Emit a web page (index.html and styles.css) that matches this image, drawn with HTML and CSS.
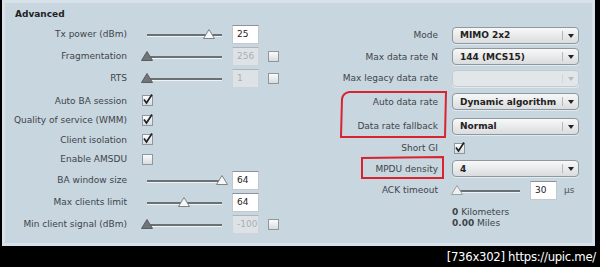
FILE: index.html
```html
<!DOCTYPE html>
<html lang="en">
<head>
    <meta charset="UTF-8">
    <title>Advanced</title>
    <link rel="stylesheet" href="styles.css">
</head>
<body>
<div class="panel">
    <div class="legend">Advanced</div>
    <div class="cols">
        <div class="col col-left">
            <div class="row">
                <label>Tx power (dBm)</label>
                <div class="slider"><div class="track"></div><svg class="thumb" style="left:61px" width="12" height="10"><path d="M6 0.5 L11.5 9.5 L0.5 9.5 Z"/></svg></div>
                <input class="num" type="text" value="25">
            </div>
            <div class="row">
                <label>Fragmentation</label>
                <div class="slider off"><div class="track"></div><svg class="thumb" style="left:-1px" width="12" height="10"><path d="M6 0.5 L11.5 9.5 L0.5 9.5 Z"/></svg></div>
                <input class="num" type="text" value="256" disabled>
                <span class="box"></span>
            </div>
            <div class="row">
                <label>RTS</label>
                <div class="slider off"><div class="track"></div><svg class="thumb" style="left:-1px" width="12" height="10"><path d="M6 0.5 L11.5 9.5 L0.5 9.5 Z"/></svg></div>
                <input class="num" type="text" value="1" disabled>
                <span class="box"></span>
            </div>
            <div class="row compact gap">
                <label>Auto BA session</label>
                <span class="box checked"><svg width="11" height="11"><path d="M2 5.5 L4.5 9 L10 0.5"/></svg></span>
            </div>
            <div class="row compact">
                <label>Quality of service (WMM)</label>
                <span class="box checked"><svg width="11" height="11"><path d="M2 5.5 L4.5 9 L10 0.5"/></svg></span>
            </div>
            <div class="row compact">
                <label>Client isolation</label>
                <span class="box checked"><svg width="11" height="11"><path d="M2 5.5 L4.5 9 L10 0.5"/></svg></span>
            </div>
            <div class="row compact">
                <label>Enable AMSDU</label>
                <span class="box"></span>
            </div>
            <div class="row">
                <label>BA window size</label>
                <div class="slider"><div class="track"></div><svg class="thumb" style="left:74px" width="12" height="10"><path d="M6 0.5 L11.5 9.5 L0.5 9.5 Z"/></svg></div>
                <input class="num" type="text" value="64">
            </div>
            <div class="row">
                <label>Max clients limit</label>
                <div class="slider"><div class="track"></div><svg class="thumb" style="left:36px" width="12" height="10"><path d="M6 0.5 L11.5 9.5 L0.5 9.5 Z"/></svg></div>
                <input class="num" type="text" value="64">
            </div>
            <div class="row">
                <label>Min client signal (dBm)</label>
                <div class="slider off"><div class="track"></div><svg class="thumb" style="left:-1px" width="12" height="10"><path d="M6 0.5 L11.5 9.5 L0.5 9.5 Z"/></svg></div>
                <input class="num" type="text" value="-100" disabled>
                <span class="box"></span>
            </div>
        </div>

        <div class="col col-right">
            <div class="row">
                <label>Mode</label>
                <div class="select"><span class="value">MIMO 2x2</span><span class="arrow"></span></div>
            </div>
            <div class="row r21">
                <label>Max data rate N</label>
                <div class="select"><span class="value">144 (MCS15)</span><span class="arrow"></span></div>
            </div>
            <div class="row">
                <label>Max legacy data rate</label>
                <div class="select off"><span class="value"></span><span class="arrow"></span></div>
            </div>
            <div class="row r25">
                <label>Auto data rate</label>
                <div class="select"><span class="value">Dynamic algorithm</span><span class="arrow"></span></div>
            </div>
            <div class="row r24">
                <label>Data rate fallback</label>
                <div class="select"><span class="value">Normal</span><span class="arrow"></span></div>
            </div>
            <div class="row r20">
                <label>Short GI</label>
                <span class="box checked"><svg width="11" height="11"><path d="M2 5.5 L4.5 9 L10 0.5"/></svg></span>
            </div>
            <div class="row r21">
                <label>MPDU density</label>
                <div class="select"><span class="value">4</span><span class="arrow"></span></div>
            </div>
            <div class="row">
                <label>ACK timeout</label>
                <div class="slider short"><div class="track"></div><svg class="thumb" style="left:-1px" width="12" height="10"><path d="M6 0.5 L11.5 9.5 L0.5 9.5 Z"/></svg></div>
                <input class="num" type="text" value="30">
                <span class="unit">μs</span>
            </div>
            <div class="distance">
                <div><b>0</b> Kilometers</div>
                <div><b>0.00</b> Miles</div>
            </div>
        </div>
    </div>
</div>
<div class="credit">[736x302] https://upic.me/</div>

<!-- red marker boxes drawn over the screenshot -->
<svg class="marks" width="600" height="267">
    <path d="M341 136 L342 99 Q343 93 349 92 L446 92 L445 137 L340 137"/>
    <path d="M362 178 L362 158 L443 157 L443 178 L361 178"/>
</svg>
</body>
</html>
```

FILE: styles.css
```css
body {
    margin: 0;
    background-color: #000;
    font-family: "DejaVu Sans", Verdana, sans-serif;
    font-size: 9px;
    color: #404448;
    position: relative;
    width: 600px;
    height: 267px;
    overflow: hidden;
}
.panel {
    margin-left: 2px;
    width: 587px;
    height: 240px;
    background-color: #c8d6e0;
    border: 3px solid #d6e1e9;
}
.legend {
    padding: 5px 0 0 10px;
    height: 12px;
    line-height: 12px;
    font-weight: bold;
    color: #222;
}
.cols {
    display: flex;
    margin-top: 3px;
}
.col-left {
    width: 295px;
}
.col-right {
    padding-top: 1px;
}
.row {
    display: flex;
    align-items: center;
    height: 22px;
}
.row.compact {
    height: 19.5px;
}
.row.gap {
    margin-top: 2px;
}
.row.r20 { height: 20px; }
.row.r21 { height: 21px; }
.row.r24 { height: 24px; }
.row.r25 { height: 25px; }
label {
    text-align: right;
    white-space: nowrap;
}
.col-left label {
    width: 122px;
    margin-right: 15px;
}
.col-right label {
    width: 138px;
    margin-right: 14px;
}

/* slider */
.slider {
    position: relative;
    width: 82px;
    height: 14px;
}
.slider.short {
    width: 70px;
}
.track {
    margin: 7px 2px 0 5px;
    height: 2px;
    background-color: #6b7075;
    box-shadow: 0 1px 0 #eef3f6;
}
.short .track {
    margin-left: 3px;
}
.thumb {
    position: absolute;
    top: 2px;
}
.thumb path {
    fill: #f6f7f8;
    stroke: #7d8388;
    stroke-width: 1;
}
.off .thumb path {
    fill: #727578;
    stroke: #5a5d60;
}
.short .thumb path {
    fill: #eef0f2;
    stroke: #9aa0a5;
}

/* text inputs */
.num {
    box-sizing: border-box;
    width: 27px;
    height: 19px;
    margin: 0 0 0 8px;
    padding: 0 0 0 4px;
    font-family: inherit;
    font-size: 9px;
    color: #222;
    background-color: #fff;
    border: 1px solid #c2cad0;
    border-top-color: #8c9297;
    border-radius: 0;
    outline: none;
}
.num:disabled {
    background-color: #dde2e6;
    color: #a9afb4;
    border-color: #cdd3d8;
    border-top-color: #aeb4b9;
}
.unit {
    margin-left: 7px;
    color: #555;
}

/* checkbox */
.box {
    box-sizing: border-box;
    display: inline-block;
    width: 11px;
    height: 11px;
    margin-left: 9px;
    border: 1px solid #8f979e;
    background: linear-gradient(#fbfbfb, #d8dcdf);
    position: relative;
}
.col-left .compact .box,
.col-right .box {
    margin-left: 0;
}
.col-right .box {
    margin-left: 2px;
}
.box svg {
    position: absolute;
    left: -1px;
    top: -2px;
}
.box svg path {
    fill: none;
    stroke: #1e2124;
    stroke-width: 1.7;
}

/* dropdown */
.select {
    box-sizing: border-box;
    display: flex;
    align-items: center;
    width: 127px;
    height: 17px;
    border: 1px solid #8e989f;
    border-radius: 4px;
    background: linear-gradient(#f8f8f8, #dadcdd);
    box-shadow: 0 1px 0 #e2eaef;
}
.select .value {
    flex: 1;
    padding-left: 7px;
    font-weight: bold;
    color: #222;
}
.select .arrow {
    width: 15px;
    height: 9px;
    border-left: 1px solid #b4b8bb;
    position: relative;
}
.select .arrow::after {
    content: "";
    position: absolute;
    left: 5px;
    top: 3px;
    border-left: 3px solid transparent;
    border-right: 3px solid transparent;
    border-top: 4px solid #222;
}
.select.off {
    background: #e1e6e9;
    border-color: #c3cbd1;
}
.select.off .arrow {
    border-left-color: #d0d5d9;
}
.select.off .arrow::after {
    border-top-color: #b6bbbf;
}

.distance {
    margin: 5.5px 0 0 152px;
    line-height: 11px;
}

.credit {
    height: 21px;
    line-height: 22px;
    padding-right: 4px;
    text-align: right;
    color: #fff;
    font-family: "Liberation Sans Narrow", "DejaVu Sans Condensed", sans-serif;
    font-size: 13px;
    letter-spacing: -0.3px;
}

.marks {
    position: absolute;
    left: 0;
    top: 0;
    pointer-events: none;
}
.marks path {
    fill: none;
    stroke: #d9232f;
    stroke-width: 2;
}
```
